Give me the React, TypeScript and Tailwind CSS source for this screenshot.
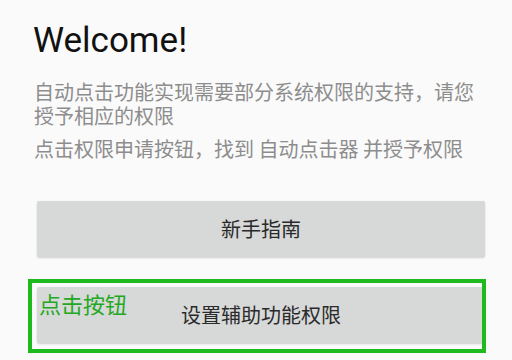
import React from 'react';

const App: React.FC = () => {
  return (
    <div
      className="w-[512px] h-[360px] overflow-hidden bg-[#fafafa] pt-[20px]"
      style={{ fontFamily: '"Roboto", "Noto Sans CJK SC", sans-serif' }}
    >
      <h1 className="pl-[33px] text-[35px] leading-[42px] text-[#111111] font-normal">Welcome!</h1>

      <div className="pl-[34px] pr-[24px] mt-[18px] text-[20px] leading-[24px] text-[#8d8d8d] font-['Noto_Sans_CJK_SC',sans-serif]">
        <p>自动点击功能实现需要部分系统权限的支持，请您授予相应的权限</p>
        <p className="mt-[9px]">点击权限申请按钮，找到 自动点击器 并授予权限</p>
      </div>

      <div className="mt-[40px] pl-[37px] w-[485px] flex flex-col gap-[30px] font-['Noto_Sans_CJK_SC',sans-serif]">
        <button className="h-[56px] w-full rounded-[2px] bg-[#d7d8d8] text-[20px] text-[#2a2a2a] shadow-[0_1px_2px_rgba(0,0,0,0.18)]">
          新手指南
        </button>

        <div className="relative">
          <button className="h-[56px] w-full rounded-[2px] bg-[#d7d8d8] text-[20px] text-[#2a2a2a] shadow-[0_1px_2px_rgba(0,0,0,0.18)]">
            设置辅助功能权限
          </button>
          <div className="absolute left-[-9px] right-[-1px] top-[-8px] bottom-[-10px] border-[4px] border-[#1ebb1e] pointer-events-none">
            <span className="absolute left-[7px] top-[6px] text-[22px] leading-[28px] text-[#22a822]">点击按钮</span>
          </div>
        </div>
      </div>
    </div>
  );
};

export default App;
